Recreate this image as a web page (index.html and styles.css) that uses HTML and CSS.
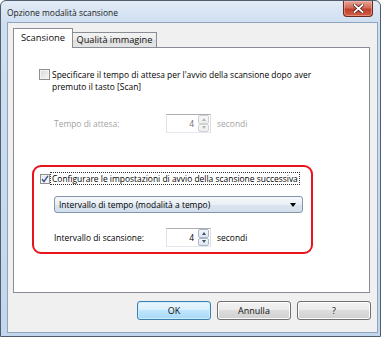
FILE: index.html
```html
<!DOCTYPE html>
<html>
<head>
<meta charset="utf-8">
<link rel="stylesheet" href="styles.css">
</head>
<body>
<div class="window">
  <div class="titlebar">
    <span class="title">Opzione modalità scansione</span>
    <div class="close">
      <svg width="11" height="9" viewBox="0 0 11 9">
        <path d="M1.5 1 L9.5 8 M9.5 1 L1.5 8" stroke="#4a2018" stroke-width="3.4" stroke-linecap="square"/>
        <path d="M1.5 1 L9.5 8 M9.5 1 L1.5 8" stroke="#ffffff" stroke-width="1.8" stroke-linecap="square"/>
      </svg>
    </div>
  </div>
  <div class="client">
    <div class="tabs">
      <div class="tab active">Scansione</div>
      <div class="tab">Qualità immagine</div>
    </div>
    <div class="panel">
      <div class="check-row">
        <span class="cb"></span>
        <span class="check-label">Specificare il tempo di attesa per l'avvio della scansione dopo aver<br>premuto il tasto [Scan]</span>
      </div>
      <div class="field-row disabled">
        <span class="field-label">Tempo di attesa:</span>
        <div class="spin">
          <span class="spin-val">4</span>
          <span class="spin-btns"><span class="sb up"></span><span class="sb down"></span></span>
        </div>
        <span class="unit">secondi</span>
      </div>
      <div class="highlight">
        <div class="check-row2">
          <span class="cb small checked">
            <svg width="8" height="8" viewBox="0 0 8 8"><path d="M1 4.2 L3 6.5 L7 0.8" fill="none" stroke="#3f5690" stroke-width="1.4"/></svg>
          </span>
          <span class="focus-label">Configurare le impostazioni di avvio della scansione successiva</span>
        </div>
        <div class="combo">
          <span>Intervallo di tempo (modalità a tempo)</span>
          <span class="combo-arrow"></span>
        </div>
        <div class="field-row inner">
          <span class="field-label">Intervallo di scansione:</span>
          <div class="spin">
            <span class="spin-val">4</span>
            <span class="spin-btns"><span class="sb up"></span><span class="sb down"></span></span>
          </div>
          <span class="unit">secondi</span>
        </div>
      </div>
    </div>
    <div class="buttons">
      <div class="btn default">OK</div>
      <div class="btn">Annulla</div>
      <div class="btn">?</div>
    </div>
  </div>
</div>
</body>
</html>
```
FILE: styles.css
```css
body {
  margin: 0;
  background: #ffffff;
  font-family: "Open Sans", "Noto Sans", sans-serif;
  font-size: 8.45px;
  color: #000;
}

.window {
  box-sizing: border-box;
  width: 381px;
  height: 337px;
  border: 1px solid #4f5d6e;
  border-radius: 6px 6px 0 0;
  background: linear-gradient(#e2ebf6, #cfdff1 22px, #c2d6ed);
  padding: 0 2px 3px 6px;
  display: flex;
  flex-direction: column;
}

.titlebar {
  height: 21px;
  display: flex;
  align-items: flex-start;
}

.title {
  margin-top: 6px;
  line-height: 12px;
  color: #1a1a1a;
}

.close {
  margin-left: auto;
  margin-right: 5px;
  width: 30px;
  height: 16px;
  box-sizing: border-box;
  border: 1px solid #6b2a20;
  border-top: none;
  border-radius: 0 0 4px 4px;
  background: linear-gradient(#e9a697, #d26a57 45%, #c1402d 55%, #cf5e44);
  display: flex;
  align-items: center;
  justify-content: center;
  box-shadow: inset 0 0 0 1px rgba(255, 200, 190, 0.45);
}

.close svg { display: block; }

.client {
  flex: 1;
  border: 1px solid #8fa4bd;
  background: #f0f0f0;
  padding: 5px 7px 0 5px;
  display: flex;
  flex-direction: column;
}

.tabs {
  display: flex;
  align-items: flex-end;
  height: 19px;
}

.tab {
  box-sizing: border-box;
  height: 15px;
  width: 85px;
  margin-left: -1px;
  border: 1px solid #898c95;
  border-bottom: none;
  background: linear-gradient(#f3f3f3, #ebebeb 50%, #dedede 50%, #e5e5e5);
  font-size: 9.2px;
  line-height: 14px;
  text-align: center;
  color: #111;
}

.tab.active {
  position: relative;
  z-index: 1;
  width: 60px;
  height: 20px;
  margin-left: 0;
  margin-bottom: -1px;
  background: #fff;
  line-height: 18px;
  font-size: 9.4px;
}

.panel {
  box-sizing: border-box;
  height: 246px;
  border: 1px solid #898c95;
  background: #fff;
  padding: 21px 0 0 25px;
}

.check-row {
  display: flex;
  align-items: flex-start;
}

.cb {
  flex: none;
  box-sizing: border-box;
  width: 11px;
  height: 11px;
  border: 1px solid #8e8f8f;
  background: linear-gradient(135deg, #d8d8d8, #f6f6f6);
  box-shadow: inset 0 0 0 1px #f4f4f4;
}

.cb.small {
  width: 10px;
  height: 10px;
  display: flex;
  align-items: center;
  justify-content: center;
  background: linear-gradient(135deg, #dfe3ea, #fbfbfb);
}

.cb svg { display: block; }

.check-label {
  margin-left: 2px;
  line-height: 12px;
  margin-top: 0;
}

.field-row {
  display: flex;
  align-items: center;
  height: 19px;
  margin-top: 21px;
  padding-left: 15px;
}

.field-row.disabled { color: #a3a3a3; }

.field-label { width: 112px; flex: none; }

.spin {
  box-sizing: border-box;
  width: 45px;
  height: 19px;
  border: 1px solid #abadb3;
  border-color: #abadb3 #dbdfe6 #e3e9ef #e2e3ea;
  background: #fff;
  display: flex;
  align-items: stretch;
}

.spin-val {
  flex: 1;
  text-align: right;
  padding-right: 4px;
  line-height: 17px;
  color: #000;
}

.disabled .spin-val { color: #6d6d6d; }

.spin-btns {
  width: 11px;
  display: flex;
  flex-direction: column;
  margin: 0 1px 0 0;
}

.sb {
  flex: 1;
  box-sizing: border-box;
  border: 1px solid #a9b6c8;
  border-radius: 2px;
  background: linear-gradient(#f4f7fb, #dde6f1);
  display: flex;
  align-items: center;
  justify-content: center;
}

.sb::after {
  content: "";
  width: 0;
  height: 0;
  border-left: 2.5px solid transparent;
  border-right: 2.5px solid transparent;
}

.sb.up::after { border-bottom: 3px solid #3d4e66; }
.sb.down::after { border-top: 3px solid #3d4e66; }

.disabled .sb {
  border-color: #cfd1d4;
  background: linear-gradient(#f8f8f8, #eeeeee);
}
.disabled .sb.up::after { border-bottom-color: #b3b3b3; }
.disabled .sb.down::after { border-top-color: #b3b3b3; }

.unit { margin-left: 6px; }

.highlight {
  box-sizing: border-box;
  width: 281px;
  height: 89px;
  margin: 32px 0 0 -7px;
  border: 2px solid #e8131b;
  border-radius: 9px;
  padding: 5px 0 0 6px;
}

.check-row2 {
  display: flex;
  align-items: center;
  height: 13px;
}

.focus-label {
  box-sizing: border-box;
  height: 13px;
  line-height: 11px;
  border: 1px dotted #333;
  padding: 0 1px;
  white-space: nowrap;
}

.combo {
  box-sizing: border-box;
  width: 249px;
  height: 17px;
  margin: 11px 0 0 14px;
  border: 1px solid #8394ab;
  border-radius: 3px;
  background: linear-gradient(#f6f9fc, #e9eff6 50%, #dae4ef 50%, #d3dfec);
  display: flex;
  align-items: center;
  justify-content: space-between;
  padding: 0 6px 0 4px;
  line-height: 15px;
}

.combo-arrow {
  width: 0;
  height: 0;
  border-left: 3.5px solid transparent;
  border-right: 3.5px solid transparent;
  border-top: 4px solid #000;
}

.field-row.inner {
  margin-top: 15px;
  padding-left: 14px;
}

.buttons {
  display: flex;
  justify-content: flex-end;
  gap: 6px;
  margin: 8px -1px 0 0;
}

.btn {
  box-sizing: border-box;
  width: 74px;
  height: 19px;
  border: 1px solid #707070;
  border-radius: 3px;
  background: linear-gradient(#f2f2f2, #ebebeb 50%, #dddddd 50%, #cfcfcf);
  box-shadow: inset 0 0 0 1px #fcfcfc;
  text-align: center;
  line-height: 17px;
  font-size: 9px;
  color: #111;
}

.btn.default {
  border-color: #3c7fb1;
  background: linear-gradient(#eaf6fd, #d9f0fc 50%, #bee6fd 50%, #a7d9f5);
  box-shadow: inset 0 0 0 1px #cfeefe;
}
```
